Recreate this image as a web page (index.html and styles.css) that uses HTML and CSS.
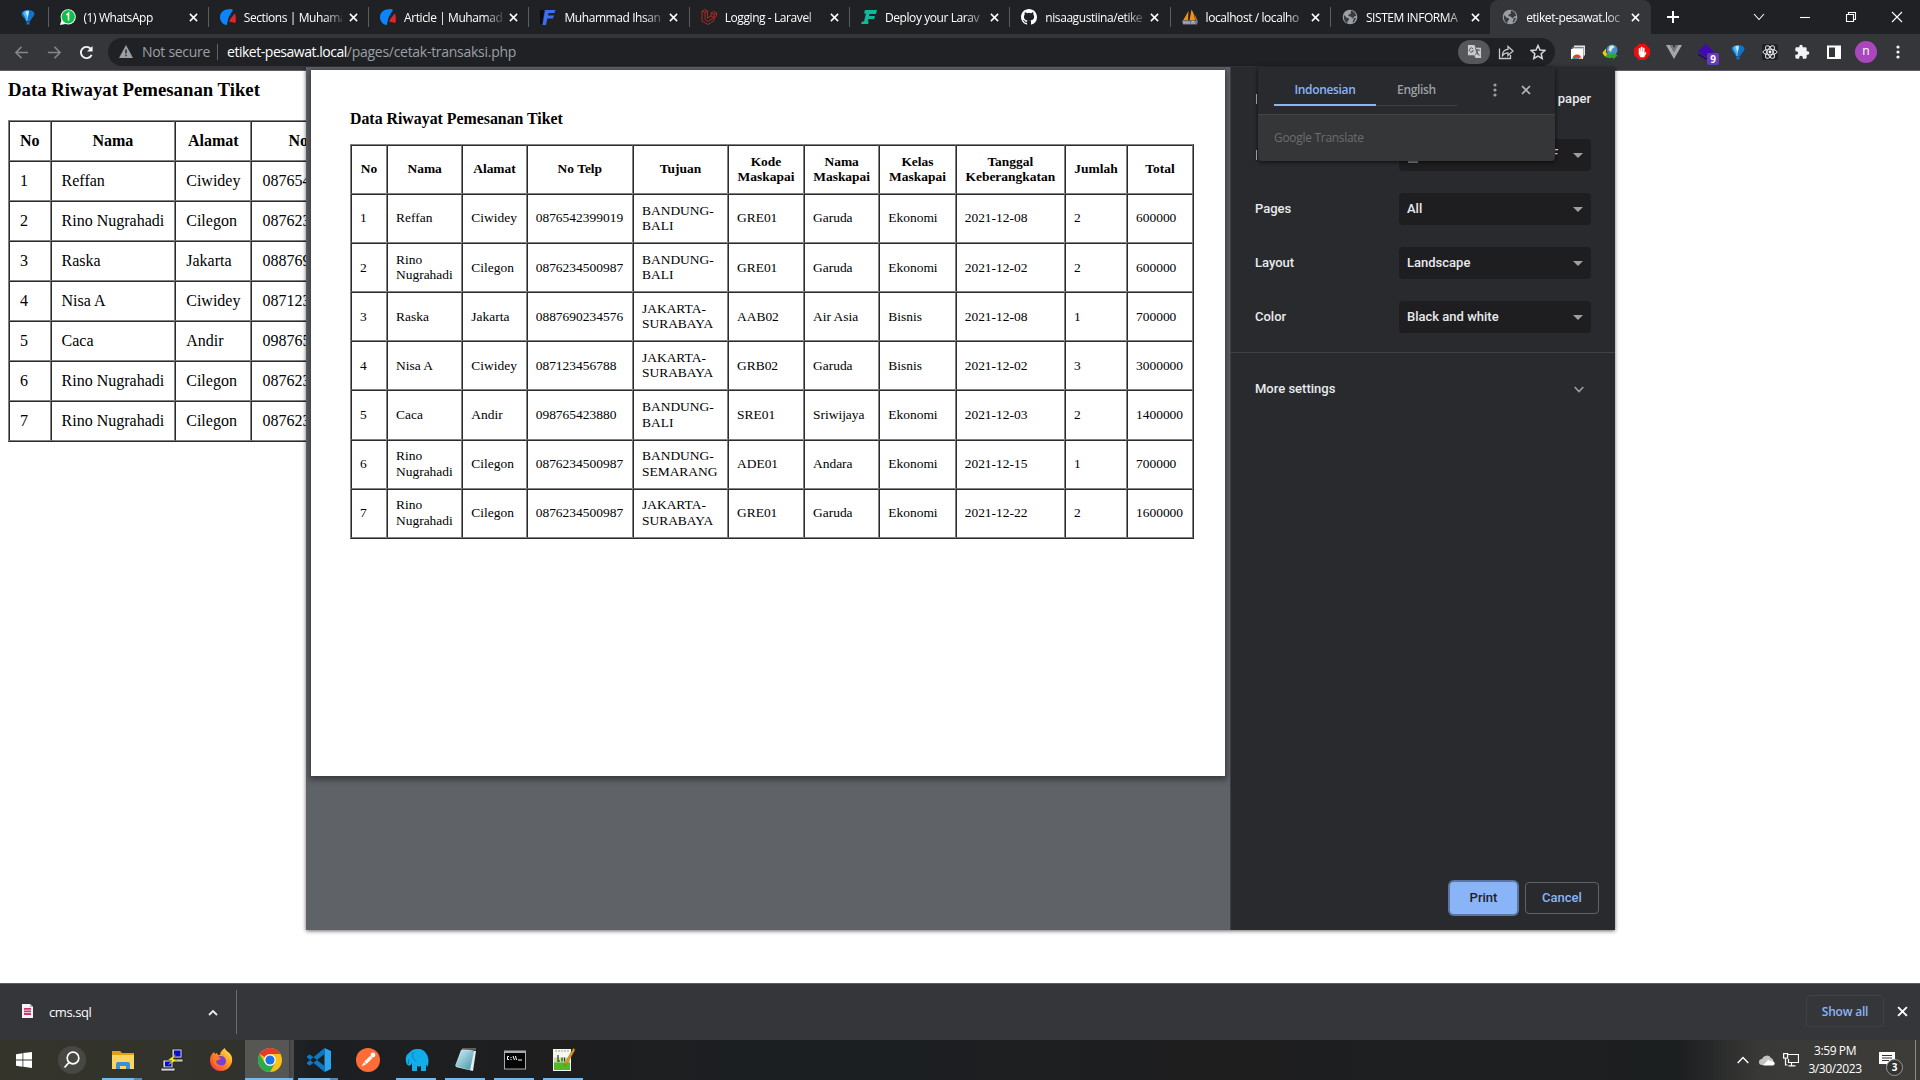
FILE: index.html
```html
<!DOCTYPE html>
<html lang="id">
<head>
<meta charset="utf-8">
<title>etiket-pesawat.local</title>
<link rel="stylesheet" href="styles.css">
</head>
<body>
<svg class="defs" width="0" height="0">
  <symbol id="x" viewBox="0 0 10 10"><path d="M1 1l8 8M9 1L1 9" fill="none" stroke="currentColor" stroke-width="1.7"/></symbol>
  <symbol id="globe" viewBox="0 0 16 16"><circle cx="8" cy="8" r="7.300" fill="#9aa0a6"/><path d="M2 6l2.500 2.500L7 9.500v1.500l-1.500 1v2.500C3 13.500 1.500 10 2 6zM9 1.500c3 .5 5 3 5.200 5.500L12 7.500l-1 2-2.500-2-2-.5V5.500l2-.5zM12 9l2 0-2 4-1.500.5z" fill="#3a3b3f"/></symbol>
  <symbol id="cms" viewBox="0 0 16 16"><path d="M10.500 0C4 0 0 3.500 0 8c0 4.500 3.200 8 7 8 .5-3.500 1-5.500 2-8.500L13 1C12.200.3 11.400 0 10.500 0z" fill="#0a84ff"/><path d="M15 4.500c1 3 1.200 6.500.3 9.500L9 12.500c1.500-3 3.500-6 6-8z" fill="#e0242c"/></symbol>
  <symbol id="balloon" viewBox="0 0 16 16"><path d="M1.500 4.500C2 2.200 4.500 1 8 1s6 1.200 6.500 3.500c0 2.500-3 4.500-4.500 8H6C5 9 1.500 7 1.500 4.500z" fill="#1173c9"/><path d="M3 4c1-2 3-2.500 6-2.500L7.500 12H6.500C6 8.500 4 7 3 4z" fill="#4fb9f5"/><path d="M5.500 2.200h3.500L7.600 9z" fill="#c8ecff"/><rect x="6.500" y="12.800" width="3" height="2.700" fill="#1a6fb5"/></symbol>
</svg>

<header class="tabstrip">
  <div class="tab pinned"><svg class="fav"><use href="#balloon"/></svg></div>
  <div class="tab"><svg class="fav" viewBox="0 0 16 16"><circle cx="8.200" cy="7.800" r="7.600" fill="#fff"/><path d="M0 16l1.500-5 4 4z" fill="#fff"/><circle cx="8.200" cy="7.800" r="6.700" fill="#0fbf4a"/><path d="M6.500 6l2-1.800V11.500" fill="none" stroke="#fff" stroke-width="1.600"/></svg><span class="title">(1) WhatsApp</span><svg class="close"><use href="#x"/></svg></div>
  <div class="tab"><svg class="fav"><use href="#cms"/></svg><span class="title">Sections | Muhama</span><svg class="close"><use href="#x"/></svg></div>
  <div class="tab"><svg class="fav"><use href="#cms"/></svg><span class="title">Article | Muhamad</span><svg class="close"><use href="#x"/></svg></div>
  <div class="tab"><svg class="fav" viewBox="0 0 16 16"><path d="M0 1h4L2 15H0z" fill="#0b0b12"/><path d="M5 1h10.500l-1 3H8.500L8 6.500h6l-1 3H7.300L6 16H2.500z" fill="#3d6df2"/></svg><span class="title">Muhammad Ihsan</span><svg class="close"><use href="#x"/></svg></div>
  <div class="tab"><svg class="fav" viewBox="0 0 16 16"><path d="M1 2l3-1.500 2.500 1.500v7L10 7V4l3-1.500L15.500 4v3L13 8.500v3L7 15.500 1 12zM1 2l3 1.500 2.500-1.500M4 3.500v7l3 2 6-4M10 4l3 1.500L15.500 4M13 5.500v3L10 7" fill="none" stroke="#b52c28" stroke-width=".9"/></svg><span class="title">Logging - Laravel</span><svg class="close"><use href="#x"/></svg></div>
  <div class="tab"><svg class="fav" viewBox="0 0 16 16"><path d="M4 1h12l-1 4H8.500L8 7h6l-1 3H7.500L6.700 12.500H8L7 15H0l1-2.500h2L5 4.500H3z" fill="#12b89a"/></svg><span class="title">Deploy your Larav</span><svg class="close"><use href="#x"/></svg></div>
  <div class="tab"><svg class="fav" viewBox="0 0 16 16"><path fill="#fff" d="M8 0C3.580 0 0 3.580 0 8c0 3.540 2.290 6.530 5.470 7.590.4.070.55-.17.55-.38v-1.490c-2.010.37-2.530-.49-2.690-.94-.09-.23-.48-.94-.82-1.130-.28-.15-.68-.52-.01-.53.63-.01 1.080.58 1.230.82.72 1.210 1.870.87 2.330.66.07-.52.28-.87.51-1.070-1.780-.2-3.640-.89-3.640-3.950 0-.87.31-1.590.82-2.150-.08-.2-.36-1.020.08-2.120 0 0 .67-.21 2.200.82a7.600 7.600 0 0 1 4 0c1.530-1.040 2.200-.82 2.200-.82.44 1.100.16 1.920.08 2.120.51.56.82 1.270.82 2.150 0 3.070-1.870 3.750-3.650 3.950.29.25.54.73.54 1.480v2.200c0 .21.150.46.550.38A8 8 0 0 0 16 8c0-4.420-3.580-8-8-8z"/></svg><span class="title">nisaagustiina/etike</span><svg class="close"><use href="#x"/></svg></div>
  <div class="tab"><svg class="fav" viewBox="0 0 16 16"><path d="M6.500 2L1 11.500h5zM9.500.5l-2 11h5.500c0-4-1.500-8-3.500-11z" fill="#f29111"/><path d="M12.500 5l2.800 6.500h-1.600z" fill="#f29111"/><path d="M0 11.500h16l-1 4H1z" fill="#777b9b"/><path d="M2 15v-2.500l1.500 1.500L5 12.500V15M7 12.500v2.500M10 15v-2.500h2V15" stroke="#ccd" fill="none" stroke-width=".8"/></svg><span class="title">localhost / localho</span><svg class="close"><use href="#x"/></svg></div>
  <div class="tab"><svg class="fav"><use href="#globe"/></svg><span class="title">SISTEM INFORMA</span><svg class="close"><use href="#x"/></svg></div>
  <div class="tab active"><svg class="fav"><use href="#globe"/></svg><span class="title">etiket-pesawat.loc</span><svg class="close"><use href="#x"/></svg></div>
  <svg class="plus" viewBox="0 0 14 14"><path d="M7 1v12M1 7h12" stroke="#fff" stroke-width="2"/></svg>
  <div class="winbtns">
    <svg viewBox="0 0 12 12"><path d="M1 3l5 5.500L11 3" /></svg>
    <svg viewBox="0 0 12 12"><path d="M1 6.500h10"/></svg>
    <svg viewBox="0 0 12 12"><path d="M1.500 3.500h7v7h-7zM3.500 3.500v-2h7v7h-2"/></svg>
    <svg viewBox="0 0 12 12"><path d="M1 1l10 10M11 1L1 11"/></svg>
  </div>
</header>

<nav class="toolbar">
  <div class="navbtns">
    <svg viewBox="0 0 16 16"><path d="M15 8H2M8 2L2 8l6 6" fill="none" stroke="#85878b" stroke-width="1.600"/></svg>
    <svg viewBox="0 0 16 16"><path d="M1 8h13M8 2l6 6-6 6" fill="none" stroke="#85878b" stroke-width="1.600"/></svg>
    <svg viewBox="0 0 16 16"><path d="M13.500 10.500A6 6 0 1 1 12.500 4" fill="none" stroke="#f1f3f4" stroke-width="2"/><path d="M14.500 1v6H8.500z" fill="#f1f3f4"/></svg>
  </div>
  <div class="omnibox">
    <svg class="warn" viewBox="0 0 14 13"><path d="M7 0l7 13H0z" fill="#9aa0a6"/><path d="M7 4.500v4M7 9.700v1.600" stroke="#202124" stroke-width="1.400"/></svg>
    <span class="insecure">Not secure</span><i class="bar"></i>
    <span class="host">etiket-pesawat.local</span><span class="path">/pages/cetak-transaksi.php</span>
    <span class="fill"></span>
    <span class="pill"><svg viewBox="0 0 16 16"><path d="M1 1h7l1 3h6v11H9l-1-3H1z" fill="#c9cbce"/><path d="M6.500 5.300a2.200 2.200 0 1 0 .2 2H5M9 6.500h5M11.500 5.500v1c0 2-1.500 4-3 5M10 8c1 2 2 3 3.500 4M9 4l3 8" fill="none" stroke="#55575b"/></svg></span>
    <svg class="ic" viewBox="0 0 16 16"><path d="M1.500 4.500v10h11V11M4.500 11.500c0-4 2-6 5.500-6.200V2.500l5 4.500-5 4.500V8.800c-2.500 0-4 .7-5.500 2.700z" fill="none" stroke="#c7c9cc" stroke-width="1.300"/></svg>
    <svg class="ic" viewBox="0 0 16 16"><path d="M8 1.500l2 4.500 4.800.5-3.600 3.200 1 4.800L8 12l-4.200 2.500 1-4.800L1.200 6.500 6 6z" fill="none" stroke="#d5d7da" stroke-width="1.500"/></svg>
  </div>
  <div class="ext">
    <svg viewBox="0 0 16 16"><path d="M4 1.500h11v10h-1.500V3H4z" fill="#e4e4e4"/><path d="M2.500 3.500h11v10h-1.500V5h-9.500z" fill="#cfcfcf"/><rect x="1" y="5" width="12" height="10" fill="#fff"/><path d="M2.500 15a4.500 4.500 0 0 1 9 0z" fill="#e33b2e"/><path d="M2.500 15a4.500 4.500 0 0 1 1.200-3L6 15z" fill="#2ba24c"/><path d="M11.500 15a4.500 4.500 0 0 0-.6-2.200L8 15z" fill="#fbc116"/><path d="M5 15a2 2 0 0 1 4 0z" fill="#4285f4"/></svg>
    <svg viewBox="0 0 16 16"><circle cx="10" cy="6" r="5.500" fill="#4a8fd6"/><path d="M7.500 2.500c2-1.500 4-1 5 .5L10 5 9 8 6.500 6z" fill="#e4efc0"/><path d="M.5 8.500L4 6v2.500c2 2 4 2.500 7 1.500V8l4.500 3.500L11 15.500V13.500C6 15 2 13.500.5 8.500z" fill="#2fa52f"/><path d="M.5 8.500L4 4.500v4l1.500 1.500-2 2.500C2 11.500 1 10 .5 8.500z" fill="#f0c21b"/></svg>
    <svg class="big" viewBox="0 0 16 16"><path d="M5 0h6l5 5v6l-5 5H5l-5-5V5z" fill="#ee0c0c"/><path d="M5 7V4.500h1.200V8M7 8V3h1.200v5M9 8V4h1.200v6l1-1.800 1 .5L10 13H6.500L5 10V7z" fill="#fff" stroke="#fff" stroke-width=".6"/></svg>
    <svg viewBox="0 0 16 16"><path d="M0 1h4l4 7 4-7h4L8 15z" fill="#a5a7aa"/><path d="M4 1h2.500L8 4l1.500-3H12L8 8z" fill="#76787b"/></svg>
    <span class="kite"><svg viewBox="0 0 16 16"><path d="M8 0l8 8-8 5-8-6z" fill="#4208b4"/><path d="M0 9l8 5 4-2.500V14l-4 2-8-5z" fill="#2b0580"/></svg><b>9</b></span>
    <svg viewBox="0 0 16 16"><use href="#balloon"/></svg>
    <svg viewBox="0 0 16 16"><rect width="16" height="16" rx="2" fill="#202124"/><g fill="none" stroke="#e4e5e7" stroke-width="1"><ellipse cx="8" cy="8" rx="7" ry="2.800"/><ellipse cx="8" cy="8" rx="7" ry="2.800" transform="rotate(60 8 8)"/><ellipse cx="8" cy="8" rx="7" ry="2.800" transform="rotate(120 8 8)"/></g><circle cx="8" cy="8" r="1.400" fill="#fff"/></svg>
    <svg viewBox="0 0 24 24"><path fill="#f1f3f4" d="M20.500 11H19V7a2 2 0 0 0-2-2h-4V3.500a2.500 2.500 0 0 0-5 0V5H4a2 2 0 0 0-2 2v3.800h1.500a2.700 2.700 0 0 1 0 5.400H2V20a2 2 0 0 0 2 2h3.800v-1.500a2.700 2.700 0 0 1 5.400 0V22H17a2 2 0 0 0 2-2v-4h1.500a2.500 2.500 0 0 0 0-5z"/></svg>
    <svg viewBox="0 0 16 16"><rect x="2" y="2.500" width="12" height="11.500" fill="none" stroke="#fff" stroke-width="2"/><rect x="9" y="2" width="5" height="12" fill="#fff"/></svg>
    <span class="avatar">n</span>
    <svg viewBox="0 0 16 16"><g fill="#f1f3f4"><circle cx="8" cy="3" r="1.600"/><circle cx="8" cy="8" r="1.600"/><circle cx="8" cy="13" r="1.600"/></g></svg>
  </div>
</nav>

<main class="page">
  <div class="doc">
    <h3>Data Riwayat Pemesanan Tiket</h3>
    <table class="riwayat">
      <tr><th>No</th><th>Nama</th><th>Alamat</th><th class="telp">No</th></tr>
      <tr><td>1</td><td>Reffan</td><td>Ciwidey</td><td>087654</td></tr>
      <tr><td>2</td><td>Rino Nugrahadi</td><td>Cilegon</td><td>087623</td></tr>
      <tr><td>3</td><td>Raska</td><td>Jakarta</td><td>088769</td></tr>
      <tr><td>4</td><td>Nisa A</td><td>Ciwidey</td><td>087123</td></tr>
      <tr><td>5</td><td>Caca</td><td>Andir</td><td>098765</td></tr>
      <tr><td>6</td><td>Rino Nugrahadi</td><td>Cilegon</td><td>087623</td></tr>
      <tr><td>7</td><td>Rino Nugrahadi</td><td>Cilegon</td><td>087623</td></tr>
    </table>
  </div>
</main>

<section class="dialog">
  <div class="preview">
    <div class="paper">
      <h3>Data Riwayat Pemesanan Tiket</h3>
      <table class="riwayat print">
        <colgroup><col class="c1"><col class="c2"><col class="c3"><col class="c4"><col class="c5"><col class="c6"><col class="c7"><col class="c8"><col class="c9"><col class="c10"><col class="c11"></colgroup>
        <tr><th>No</th><th>Nama</th><th>Alamat</th><th>No Telp</th><th>Tujuan</th><th>Kode<br>Maskapai</th><th>Nama<br>Maskapai</th><th>Kelas<br>Maskapai</th><th>Tanggal<br>Keberangkatan</th><th>Jumlah</th><th>Total</th></tr>
        <tr><td>1</td><td>Reffan</td><td>Ciwidey</td><td>0876542399019</td><td>BANDUNG-<br>BALI</td><td>GRE01</td><td>Garuda</td><td>Ekonomi</td><td>2021-12-08</td><td>2</td><td>600000</td></tr>
        <tr><td>2</td><td>Rino<br>Nugrahadi</td><td>Cilegon</td><td>0876234500987</td><td>BANDUNG-<br>BALI</td><td>GRE01</td><td>Garuda</td><td>Ekonomi</td><td>2021-12-02</td><td>2</td><td>600000</td></tr>
        <tr><td>3</td><td>Raska</td><td>Jakarta</td><td>0887690234576</td><td>JAKARTA-<br>SURABAYA</td><td>AAB02</td><td>Air Asia</td><td>Bisnis</td><td>2021-12-08</td><td>1</td><td>700000</td></tr>
        <tr><td>4</td><td>Nisa A</td><td>Ciwidey</td><td>087123456788</td><td>JAKARTA-<br>SURABAYA</td><td>GRB02</td><td>Garuda</td><td>Bisnis</td><td>2021-12-02</td><td>3</td><td>3000000</td></tr>
        <tr><td>5</td><td>Caca</td><td>Andir</td><td>098765423880</td><td>BANDUNG-<br>BALI</td><td>SRE01</td><td>Sriwijaya</td><td>Ekonomi</td><td>2021-12-03</td><td>2</td><td>1400000</td></tr>
        <tr><td>6</td><td>Rino<br>Nugrahadi</td><td>Cilegon</td><td>0876234500987</td><td>BANDUNG-<br>SEMARANG</td><td>ADE01</td><td>Andara</td><td>Ekonomi</td><td>2021-12-15</td><td>1</td><td>700000</td></tr>
        <tr><td>7</td><td>Rino<br>Nugrahadi</td><td>Cilegon</td><td>0876234500987</td><td>JAKARTA-<br>SURABAYA</td><td>GRE01</td><td>Garuda</td><td>Ekonomi</td><td>2021-12-22</td><td>2</td><td>1600000</td></tr>
      </table>
    </div>
  </div>
  <aside class="side">
    <div class="head"><i class="stem"></i><span>paper</span></div>
    <div class="row"><i class="stem"></i><div class="select dest"><span>F</span></div></div>
    <div class="row"><span>Pages</span><div class="select">All</div></div>
    <div class="row"><span>Layout</span><div class="select">Landscape</div></div>
    <div class="row"><span>Color</span><div class="select">Black and white</div></div>
    <div class="more"><span>More settings</span><svg viewBox="0 0 10 7"><path d="M.7 1L5 5.500 9.300 1" fill="none" stroke="#9aa0a6" stroke-width="1.600"/></svg></div>
    <div class="actions"><button class="print-btn">Print</button><button class="cancel-btn">Cancel</button></div>
  </aside>
</section>

<section class="translate">
  <div class="langs">
    <span class="lang on">Indonesian</span><span class="lang">English</span>
    <svg class="kebab" viewBox="0 0 4 14"><circle cx="2" cy="2" r="1.600"/><circle cx="2" cy="7" r="1.600"/><circle cx="2" cy="12" r="1.600"/></svg>
    <svg class="tclose"><use href="#x"/></svg>
  </div>
  <div class="brand">Google Translate</div>
</section>

<section class="shelf">
  <div class="download">
    <svg class="file" viewBox="0 0 11 14"><path d="M0 0h8l3 3v11H0z" fill="#f4f4f6"/><path d="M8 0l3 3H8z" fill="#b9b9c0"/><path d="M2 4h7v1.800H2zM2 6.500h7v1.800H2zM2 9h7v2H2z" fill="#d9316d"/></svg>
    <span>cms.sql</span>
    <svg class="caret" viewBox="0 0 10 7"><path d="M1 6l4-4 4 4" fill="none" stroke="#e8eaed" stroke-width="1.800"/></svg>
  </div>
  <span class="fill"></span>
  <button class="showall">Show all</button>
  <svg class="sclose"><use href="#x"/></svg>
</section>

<footer class="taskbar">
  <div class="apps">
    <div class="app"><svg class="s16" viewBox="0 0 16 16"><path d="M0 2.200l6.500-1V7.600H0zM7.300 1.100L16 0v7.600H7.300zM0 8.400h6.500v6.400L0 13.800zM7.300 8.400H16V16l-8.700-1.200z" fill="#fff"/></svg></div>
    <div class="app"><svg class="s28" viewBox="0 0 28 28"><circle cx="14" cy="14" r="14" fill="#474844"/><circle cx="15" cy="12" r="5.800" fill="none" stroke="#fff" stroke-width="1.700"/><path d="M11 16.500L6.500 21.500" stroke="#fff" stroke-width="1.800"/></svg></div>
    <div class="app run multi"><svg viewBox="0 0 24 24"><path d="M1 3h8l2 2h12v5H1z" fill="#e0a012"/><path d="M1 7h22v14H1z" fill="#fcd462"/><path d="M5 21v-5a2 2 0 0 1 2-2h10a2 2 0 0 1 2 2v5h-4v-3H9v3z" fill="#3a8fd8"/></svg></div>
    <div class="app"><svg viewBox="0 0 24 24"><g stroke="#222" stroke-width=".8"><path d="M12 1h10v9H12zM10 11h13v3H10z" fill="#c9c9c4"/><path d="M3 12h10v8H3zM1 20h14v3H1z" fill="#d8d8d2"/></g><path d="M14 2.500h6.500v6H14zM5 13.500h6.500v5H5z" fill="#0909d8"/><path d="M16 6L8 12l4 .5L8 17l9-5-4-1z" fill="#fff200" stroke="#555" stroke-width=".4"/></svg></div>
    <div class="app"><svg viewBox="0 0 24 24"><defs><linearGradient id="ff" x1="1" y1="0" x2="0" y2="1"><stop offset=".1" stop-color="#ffe14a"/><stop offset=".5" stop-color="#ff8a1c"/><stop offset="1" stop-color="#f0245e"/></linearGradient></defs><path d="M3 6l2-2 1 2 2-1 1 2 2 0c0-3 2-5 5-7 0 3 5 4 6.500 8C25 15 20 23 12 23 5 23 1 18 1 12c0-2 .5-4 2-6z" fill="url(#ff)"/><circle cx="12" cy="13" r="5" fill="#7a3fd0"/><path d="M4 9c3-1 5 0 8 1-2 3-4 2-5 3 0 3 3 5 7 4-6 4-11-1-10-8z" fill="#ff7a18"/></svg></div>
    <div class="app focus run"><svg viewBox="0 0 24 24"><circle cx="12" cy="12" r="12" fill="#fbc116"/><path d="M1.600 6A12 12 0 0 1 22.400 6H12a6 6 0 0 0-5.200 3z" fill="#e33b2e"/><path d="M1.600 6A12 12 0 0 0 12 24l5.200-9A6 6 0 0 1 6.800 15z" fill="#2da94f"/><circle cx="12" cy="12" r="5.800" fill="#fff"/><circle cx="12" cy="12" r="4.600" fill="#1a73e8"/></svg></div>
    <div class="app run multi"><svg viewBox="0 0 24 24"><path d="M17.500 0L24 3v18l-6.500 3z" fill="#2aa5ee"/><path d="M17.500 0v6L3 17.500 0 16v-1.500zM17.500 24v-6L3 6.500 0 8v1.500z" fill="#0d78c4"/></svg></div>
    <div class="app"><svg viewBox="0 0 24 24"><circle cx="12" cy="12" r="12" fill="#ff6c37"/><path d="M5.500 18.500l2.500-4.500 6-6 2.500 2-6 6z" fill="#fff"/><circle cx="17" cy="7" r="2.400" fill="#fff"/><path d="M8 14l2.500 2" stroke="#ff6c37" stroke-width=".8"/></svg></div>
    <div class="app run"><svg viewBox="0 0 24 24"><path d="M5 4C7 1.500 10 .5 14 1c5 .5 9 5 9.500 11 0 3-.5 6-1.500 7l-1-3v7h-5v-5c-1 .8-3 .8-4 0v5H7v-8c-1 2-2 3-3.500 2.500C1 16.500.5 12 1 9c.5-2 2-3.500 4-5z" fill="#12aeea"/><path d="M8.500 4c-2 4-.5 8 3 9M3.500 11v5" stroke="#0a7fb8" fill="none"/></svg></div>
    <div class="app run"><svg viewBox="0 0 24 24"><defs><linearGradient id="np" x1="0" y1="0" x2="1" y2="1"><stop offset="0" stop-color="#d8f2f7"/><stop offset="1" stop-color="#3c93ab"/></linearGradient></defs><path d="M8 1l14 2-3 20-17-4z" fill="#e8ecec"/><path d="M7 2l13 1-4 19L1 18z" fill="url(#np)"/><path d="M8 1h14" stroke="#777" stroke-width="1.500"/></svg></div>
    <div class="app run"><svg viewBox="0 0 24 24"><path d="M1 2.500h22v19H1z" fill="#aaa"/><path d="M2 5h20v15.500H2z" fill="#050505"/><path d="M6 8.500H4.500v3H6M8 9v1M8 11v1M10 8l1.500 4M12.500 8l1 4M15 12h4" stroke="#fff" fill="none"/></svg></div>
    <div class="app run"><svg viewBox="0 0 24 24"><path d="M1 1h18v22H1z" fill="#f6f8ef"/><path d="M2 14h16v8H2z" fill="#57b52a"/><path d="M2 9.500h16v5H2z" fill="#c3e59b"/><path d="M3 3h14" stroke="#999" stroke-dasharray="2 1"/><path d="M6 7v7M10 9.500v4M12.500 9.500v4M6 13h2" stroke="#333" stroke-width="1.200"/><path d="M21.500 0l-8 14-1 4 3-3L23 2z" fill="#e59a2e" stroke="#8a5313" stroke-width=".5"/></svg></div>
  </div>
  <span class="fill"></span>
  <div class="tray">
    <svg class="up" viewBox="0 0 12 8"><path d="M.7 7L6 1.500 11.300 7" fill="none" stroke="#fff" stroke-width="1.400"/></svg>
    <svg class="cloud" viewBox="0 0 16 11"><path d="M3 10a3 3 0 0 1 0-6 5 5 0 0 1 9-1 4 4 0 0 1 1 7z" fill="#c4c4c4"/><path d="M4 10.500L9 5l6 2a2 2 0 0 1-1 3.500z" fill="#fff"/></svg>
    <svg class="net" viewBox="0 0 16 14"><path d="M3.500 1.500h12v8h-10V6M8.500 9.500v3M5.500 12.900h7M2.500 5.500V12h2" fill="none" stroke="#fff" stroke-width="1.200"/><rect x=".6" y=".6" width="4" height="4.500" fill="#3b3b39" stroke="#fff" stroke-width="1.200"/></svg>
    <div class="clock"><span>3:59 PM</span><span>3/30/2023</span></div>
    <div class="notif"><svg viewBox="0 0 16 16"><path d="M0 0h16v12h-5v4l-4-4H0z" fill="#fff"/><path d="M3 3.500h10M3 6h10M3 8.500h7" stroke="#333"/></svg><b>3</b></div>
    <i class="desk"></i>
  </div>
</footer>
</body>
</html>
```
FILE: styles.css
```css
* { box-sizing: border-box; }
body { margin: 0; width: 1920px; height: 1080px; overflow: hidden; position: relative; display: flex; flex-direction: column; background: #fff; font-family: "Open Sans", "Noto Sans", sans-serif; font-size: 12px; }
svg { display: block; flex: none; }
.defs { position: absolute; }
.fill { flex: 1; }
button { font: inherit; background: none; padding: 0; }

.tabstrip { height: 34px; flex: none; background: #202124; display: flex; align-items: center; color: #fff; }
.tab { width: 160.3px; height: 34px; flex: none; display: flex; align-items: center; padding: 0 10px 0 12px; position: relative; }
.tab::before { content: ""; width: 1px; height: 20px; background: #5b5d61; position: absolute; left: 0; top: 7px; }
.tab.pinned { width: 47.500px; padding-left: 20px; }
.tab.pinned::before, .tab.active::before { display: none; }
.tab.active { background: #35363a; border-radius: 8px 8px 0 0; width: 161px; }
.fav { width: 16px; height: 16px; }
.title { width: 98px; margin-left: 8px; white-space: nowrap; letter-spacing: -.42px; -webkit-mask-image: linear-gradient(90deg, #000 80px, rgba(0,0,0,.2) 98px); mask-image: linear-gradient(90deg, #000 80px, rgba(0,0,0,.2) 98px); }
.close { width: 9px; height: 9px; margin-left: 7px; }
.plus { width: 14px; height: 14px; margin-left: 15px; }
.winbtns { margin-left: auto; display: flex; gap: 34px; padding-right: 17px; height: 28px; align-items: center; }
.winbtns svg { width: 12px; height: 12px; }
.winbtns path { fill: none; stroke: #fff; stroke-width: 1.1; }

.toolbar { height: 37px; flex: none; background: #35363a; border-bottom: 1px solid #5f5c63; display: flex; align-items: center; }
.navbtns { display: flex; gap: 16.500px; padding-left: 14px; width: 108px; }
.navbtns svg { width: 15px; height: 15px; margin-right: 1px; }
.omnibox { width: 1447px; height: 28px; margin-top: -1px; border-radius: 14px; background: #202124; display: flex; align-items: center; padding: 0 9px 0 11px; font-size: 14px; }
.warn { width: 14px; height: 13px; }
.insecure { color: #9aa0a6; margin-left: 9px; width: 67px; white-space: nowrap; letter-spacing: -.3px; }
.bar { width: 1px; height: 16px; background: #5f6368; margin: 0 9px 0 8px; }
.host { color: #fff; letter-spacing: -.47px; }
.path { color: #9aa0a6; letter-spacing: -.28px; }
.host, .path { white-space: nowrap; }
.pill { width: 32px; height: 24px; border-radius: 12px; background: #55575b; display: flex; align-items: center; justify-content: center; }
.pill svg { width: 15px; height: 15px; }
.ic { width: 16px; height: 16px; margin-left: 8px; }
.ic + .ic { margin-left: 16px; }
.ext { display: flex; align-items: center; padding-left: 7px; }
.ext > * { width: 16px; height: 16px; margin: 0 8px; }
.kite { position: relative; }
.kite b { position: absolute; left: 9px; top: 9px; width: 12px; height: 12px; border-radius: 2px; background: #673ab7; color: #fff; font-size: 10px; line-height: 12px; text-align: center; }
.ext .avatar { width: 22px; height: 22px; margin: 0 5px; border-radius: 50%; background: #ab47bc; color: #fff; text-align: center; line-height: 20px; }

.page { flex: 1; min-height: 0; background: #fff; }
.doc { width: 306px; overflow: hidden; padding: 8px 0 0 8px; font: 16px/18px "Liberation Serif", serif; color: #000; }
.doc h3 { margin: 0 0 20px; font-size: 18.76px; line-height: 21px; white-space: nowrap; }
.riwayat { border: 1px outset gray; border-spacing: 0; border-collapse: separate; white-space: nowrap; }
.riwayat th, .riwayat td { border: 1px inset gray; padding: 10px; }
.riwayat .telp { width: 126px; min-width: 126px; text-align: left; padding-left: 36px; }

.dialog { position: absolute; left: 306px; top: 67px; width: 1309px; height: 863px; display: flex; box-shadow: 0 1px 4px rgba(0,0,0,.6); }
.preview { width: 924px; padding: 3px 5px; background: #5f6368; overflow: hidden; flex: none; }
.paper { width: 914px; height: 706px; background: #fff; padding: 38px 0 0 39px; box-shadow: 0 2px 6px 2px rgba(0,0,0,.4); font: 13.46px/15.4px "Liberation Serif", serif; color: #000; }
.paper h3 { margin: 0; height: 36px; font-size: 15.85px; line-height: 22px; }
.print { table-layout: fixed; width: 844px; }
.print tr { height: 49.1px; }
.print th, .print td { padding: 0 0 1px 8px; }
.print th { padding: 0 0 1px; }
.c1 { width: 36px; } .c2 { width: 75.300px; } .c3 { width: 64.400px; } .c4 { width: 106.300px; } .c5 { width: 95px; } .c6 { width: 76px; } .c7 { width: 75.300px; } .c8 { width: 76.400px; } .c9 { width: 109.300px; } .c10 { width: 62px; } .c11 { width: 66px; }

.side { flex: 1; display: flex; flex-direction: column; background: #292a2d; border-left: 1px solid #3c4043; color: #e8eaed; font: 500 13px/16px Roboto, sans-serif; }
.head { height: 61px; display: flex; justify-content: space-between; align-items: center; padding: 2px 24px 0 25px; }
.stem { width: 1px; height: 10px; background: #b9bcc0; }
.row { height: 54px; display: flex; align-items: center; justify-content: space-between; padding: 0 24px; }
.row .stem { margin-left: 1px; }
.select { width: 192px; height: 32px; border-radius: 4px; background: #1e1e20; padding: 8px; position: relative; }
.select::after { content: ""; position: absolute; right: 8px; top: 14px; border: 5px solid transparent; border-top-color: #9aa0a6; border-bottom: 0; }
.dest { padding: 7px 0 0 152px; }
.dest::before { content: ""; position: absolute; left: 9px; top: 21px; width: 10px; height: 3px; background: #85878b; }
.more { margin-top: 8px; border-top: 1px solid #3f4145; height: 73px; display: flex; align-items: center; justify-content: space-between; padding: 0 31px 0 24px; }
.more svg { width: 10px; height: 7px; }
.actions { margin-top: auto; display: flex; justify-content: flex-end; gap: 8px; padding: 0 16px 16px; }
.actions button { height: 32px; border-radius: 4px; }
.print-btn { width: 67px; background: #8ab4f8; color: #202124; border: 0; box-shadow: 0 0 0 2px #5a76a5; }
.cancel-btn { width: 74px; border: 1px solid #5f6368; color: #8ab4f8; }

.translate { position: absolute; left: 1258px; top: 67px; width: 297px; height: 94px; border-radius: 4px; overflow: hidden; box-shadow: 0 1px 4px rgba(0,0,0,.7); background: #353638; }
.langs { height: 48px; background: #292a2d; border-bottom: 1px solid #424346; display: flex; padding: 7px 0 0 16px; }
.lang { height: 32px; width: 81px; border-bottom: 1px solid #3c4043; color: #9aa0a6; text-align: center; line-height: 32px; font-weight: 600; letter-spacing: -.33px; }
.lang.on { width: 102px; border-bottom: 2px solid #8ab4f8; color: #8ab4f8; }
.kebab { width: 4px; height: 14px; margin: 9px 0 0 36px; fill: #9aa0a6; }
.tclose { width: 10px; height: 10px; margin: 11px 0 0 24px; color: #b4b7bb; }
.brand { padding-left: 16px; line-height: 45px; color: #6a6d71; letter-spacing: -.3px; }

.shelf { height: 57px; flex: none; background: #35363a; border-top: 1px solid #5f5f63; display: flex; align-items: center; color: #fff; padding-right: 12px; }
.download { width: 237px; height: 44px; border-right: 1px solid #6a6b6f; display: flex; align-items: center; padding-left: 22px; }
.file { width: 11px; height: 14px; margin-top: -2px; }
.download span { margin-left: 16px; width: 159px; font-size: 13px; letter-spacing: -.4px; }
.caret { width: 10px; height: 7px; }
.showall { width: 78px; height: 32px; margin-top: -2px; border: 1px solid #404145; border-radius: 4px; color: #8ab4f8; font-weight: 600; letter-spacing: -.2px; }
.sclose { width: 11px; height: 11px; margin: -2px 0 0 13px; }

.taskbar { height: 40px; flex: none; display: flex; align-items: center; background: linear-gradient(90deg, #34342b 0, #31322c 240px, #1c1f22 310px, #1e1e1f 560px, #1b1f22 800px, #1e1e1f 1200px, #1c1f20 1680px, #393937 1760px, #3d3c39 1920px); }
.apps { display: flex; align-items: center; height: 40px; }
.app { width: 49px; height: 40px; display: flex; align-items: center; justify-content: center; position: relative; }
.app svg { width: 24px; height: 24px; }
.app svg.s16 { width: 16px; height: 16px; margin-right: 1px; } .app svg.s28 { width: 28px; height: 28px; margin-right: 3px; }
.run::after { content: ""; position: absolute; left: 4px; bottom: 0; width: 40px; height: 2px; background: #76b9ed; }
.multi::after { background: linear-gradient(90deg, #76b9ed 32px, #5688b0 32px); }
.focus { background: linear-gradient(90deg, #565754 44px, #393a39 44px, #4a4b4a 46px); }
.focus.run::after { left: 0; width: 48px; }
.tray { display: flex; align-items: center; height: 40px; color: #fff; }
.up { width: 12px; height: 8px; }
.cloud { width: 16px; height: 11px; margin-left: 10px; }
.net { width: 16px; height: 14px; margin-left: 8px; }
.clock { width: 72px; display: flex; flex-direction: column; text-align: center; line-height: 18px; letter-spacing: -.4px; }
.notif { position: relative; width: 16px; margin-left: 8px; }
.notif svg { width: 16px; height: 16px; }
.notif b { position: absolute; left: 7px; top: 7px; width: 17px; height: 17px; border: 1px solid #999; border-radius: 50%; background: #333; font-size: 10px; line-height: 15px; text-align: center; }
.desk { width: 5px; height: 40px; border-left: 1px solid #8a8a88; margin-left: 20px; }
```
